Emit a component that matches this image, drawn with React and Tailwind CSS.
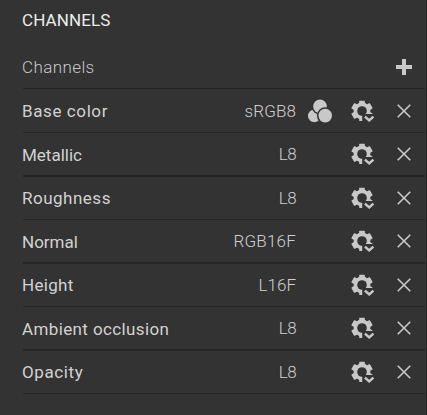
import React from 'react';

const channels = [
  { name: 'Base color', format: 'sRGB8', srgb: true, row: 'h-[43px]', line: 'h-px', label: 'tracking-[0.6px]', value: 'tracking-[0.1px]' },
  { name: 'Metallic', format: 'L8', row: 'h-[42px]', line: 'h-[2px]', label: 'pt-0.5 tracking-[0px]', value: 'tracking-[-0.6px]' },
  { name: 'Roughness', format: 'L8', row: 'h-[42px]', line: 'h-px', label: 'tracking-[0.5px]', value: 'tracking-[-0.6px]' },
  { name: 'Normal', format: 'RGB16F', row: 'h-[42px]', line: 'h-[2px]', label: 'pt-0.5 tracking-[0px]', value: 'tracking-[0.2px]' },
  { name: 'Height', format: 'L16F', row: 'h-[42px]', line: 'h-px', label: 'tracking-[0.3px]', value: 'tracking-[0px]' },
  { name: 'Ambient occlusion', format: 'L8', row: 'h-[42px]', line: 'h-[2px]', label: 'pt-0.5 tracking-[0.38px]', value: 'tracking-[-0.6px]' },
  { name: 'Opacity', format: 'L8', row: 'h-[42px]', line: 'h-px', label: 'tracking-[0.6px]', value: 'tracking-[-0.6px]' },
];

function PlusIcon() {
  return (
    <svg width="16" height="16" viewBox="0 0 16 16" fill="#c8c8c8">
      <path d="M6 0h4v6h6v4h-6v6H6v-6H0V6h6z" />
    </svg>
  );
}

function CloseIcon() {
  return (
    <svg width="16" height="16" viewBox="0 0 16 16" fill="none" stroke="#c8c8c8" strokeWidth="1.6">
      <path d="M1.7 1.7l12.6 12.6M14.3 1.7L1.7 14.3" />
    </svg>
  );
}

function ColorSpaceIcon() {
  return (
    <svg width="24" height="24" viewBox="0 0 24 24" fill="#c8c8c8">
      <circle cx="6.3" cy="16.9" r="6.3" />
      <circle cx="12" cy="7.4" r="8.2" fill="#333333" />
      <circle cx="12" cy="7.4" r="6.8" />
      <circle cx="17.2" cy="16.6" r="8.3" fill="#333333" />
      <circle cx="17.2" cy="16.6" r="6.8" />
    </svg>
  );
}

// Gear with its lower right corner cut away for the dropdown chevron
function GearMenuIcon() {
  return (
    <svg width="24" height="24" viewBox="0 0 24 24" fill="#c8c8c8">
      <circle cx="12" cy="12" r="8.4" />
      <rect x="9.2" y="1.8" width="5.6" height="20.2" rx="0.5" />
      <rect x="8.8" y="1.3" width="6.4" height="21.4" rx="0.8" transform="rotate(60 12 12)" />
      <rect x="8.8" y="1.3" width="6.4" height="21.4" rx="0.8" transform="rotate(-60 12 12)" />
      <circle cx="12" cy="12" r="4.8" fill="#333333" />
      <path d="M12.2 15.4l2.4-2.4v2h10V24H12.2z" fill="#333333" />
      <path d="M14.9 17.6l4.3 3.8 4.2-3.8" fill="none" stroke="#c8c8c8" strokeWidth="2.5" />
    </svg>
  );
}

function ChannelRow({ channel }) {
  return (
    <>
      <div className={`flex items-center ${channel.row}`}>
        <span className={`-ml-px flex-1 whitespace-nowrap font-[450] text-[#d2d2d0] ${channel.label}`}>{channel.name}</span>
        <span className={`whitespace-nowrap font-light text-[#cfcfcf] ${channel.value}`}>{channel.format}</span>
        <div className="ml-3 w-6">{channel.srgb && <ColorSpaceIcon />}</div>
        <button className="ml-[18px]"><GearMenuIcon /></button>
        <button className="ml-[22px] mr-[13px]"><CloseIcon /></button>
      </div>
      <div className={`bg-[#262626] ${channel.line}`} />
    </>
  );
}

export default function App() {
  return (
    <div className="h-[415px] w-[427px] overflow-hidden border-r border-[#242424] bg-[#333333] pl-[23px] pr-px font-['Roboto',sans-serif] text-[17px] leading-5">
      <h2 className="-ml-px h-[46px] pt-[10px] font-[450] tracking-[0.1px] text-[#ececea]">CHANNELS</h2>
      <div className="flex h-[42px] items-center justify-between pr-[13px]">
        <span className="-ml-px font-light tracking-[0.4px] text-[#c8c8c8]">Channels</span>
        <button><PlusIcon /></button>
      </div>
      <div className="h-px bg-[#262626]" />
      {channels.map((channel) => (
        <ChannelRow key={channel.name} channel={channel} />
      ))}
    </div>
  );
}
